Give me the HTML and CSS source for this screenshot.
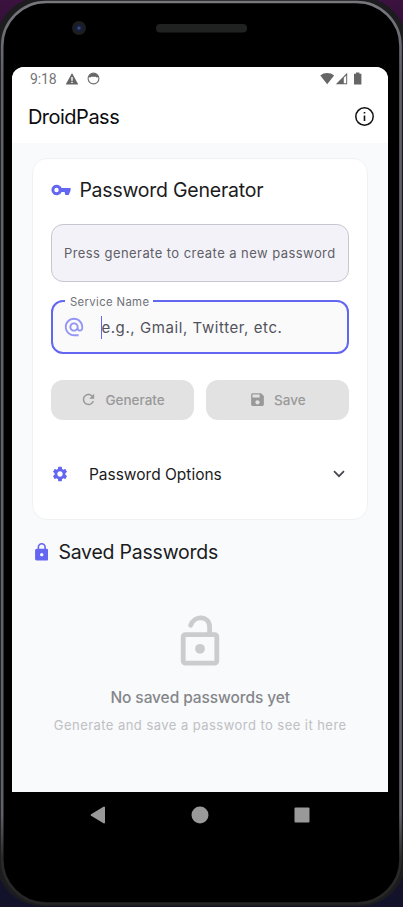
FILE: index.html
```html
<!DOCTYPE html>
<html lang="en">
<head>
<meta charset="utf-8">
<title>DroidPass</title>
<link rel="stylesheet" href="styles.css">
</head>
<body>
<div class="device">
  <svg class="shell" viewBox="0 0 403 907" aria-hidden="true">
    <defs>
      <linearGradient id="desk" x1="0" y1="0" x2="0" y2="1"><stop offset="0" stop-color="#3c123f"/><stop offset=".08" stop-color="#1d0d2b"/><stop offset="1" stop-color="#12122a"/></linearGradient>
      <linearGradient id="rim" x1="0" y1="0" x2="0" y2="1"><stop offset="0" stop-color="#77777d"/><stop offset=".08" stop-color="#606268"/><stop offset=".9" stop-color="#606268"/><stop offset=".95" stop-color="#2a2a2b"/><stop offset="1" stop-color="#262626"/></linearGradient>
    </defs>
    <rect width="403" height="907" fill="url(#desk)"/>
    <rect x="-4" y="-3" width="410" height="909" rx="46" fill="#1c1c1e"/>
    <rect x="2.200" y="2" width="398.300" height="901.500" rx="44" fill="#000" stroke="url(#rim)" stroke-width="2.600"/>
    <circle cx="79" cy="28" r="7" fill="#1c1d20"/>
    <circle cx="79" cy="28" r="4" fill="#182039"/>
    <circle cx="79" cy="28" r="1.600" fill="#3d4d83"/>
    <rect x="156" y="24" width="91" height="8.500" rx="4" fill="#202221"/>
  </svg>

  <main class="screen">
    <div class="status">
      <span class="time">9:18</span>
      <svg class="s-warn" viewBox="0 0 14 12"><path d="M7 0 13.300 11.600H.7z" fill="#666"/><path d="M6.300 4h1.400v3.800H6.300zM6.300 8.700h1.400v1.400H6.300z" fill="#fff"/></svg>
      <svg class="s-face" viewBox="0 0 13 13"><circle cx="6.500" cy="6.500" r="5.400" fill="none" stroke="#6c6c6c" stroke-width="1.100"/><path d="M1.600 4.500C3 .4 10 .4 11.400 4.500L10 5.800 8.700 4.800H4.200L3 5.800z" fill="#666"/></svg>
      <span class="grow"></span>
      <svg class="s-net" viewBox="0 0 42 14"><path d="M.3 3.500C4 .2 10.400.2 14.100 3.500L7.200 12.200z" fill="#666"/><path d="M15.800 12.200 27.200.8v11.400z" fill="#666"/><path d="M23.800 5.800 26.200 3.400v7.800h-2.400z" fill="#fff"/><path d="M34 1.800h2V.4h3.400v1.400h2v10.600H34z" fill="#666"/></svg>
    </div>
    <header class="appbar">
      <h1>DroidPass</h1>
      <svg class="info" viewBox="0 0 23 23"><circle cx="11.500" cy="11.500" r="8.700" fill="none" stroke="#111" stroke-width="1.500"/><path d="M10.700 7h1.600v1.600h-1.600zM10.700 10.400h1.600v5.600h-1.600z" fill="#111"/></svg>
    </header>

    <div class="content">
      <section class="card">
        <div class="heading">
          <svg class="i-key" viewBox="0 0 20 12"><path fill-rule="evenodd" d="M10.600 4A5.300 5.300 0 1 0 10.600 8H13.600L14.300 11H17.700L19.600 6.500V4zM5.500 3.800a2.200 2.200 0 1 1 0 4.400 2.200 2.200 0 0 1 0-4.400z"/></svg>
          <h2 class="t-gen">Password Generator</h2>
        </div>
        <div class="result"><span>Press generate to create a new password</span></div>
        <div class="field">
          <span class="label">Service Name</span>
          <svg class="i-at" viewBox="0 0 24 24"><path d="M12 2C6.480 2 2 6.480 2 12s4.480 10 10 10h5v-2h-5c-4.340 0-8-3.660-8-8s3.660-8 8-8 8 3.660 8 8v1.430c0 .79-.71 1.570-1.500 1.570s-1.500-.78-1.500-1.570V12c0-2.760-2.240-5-5-5s-5 2.240-5 5 2.240 5 5 5c1.380 0 2.640-.56 3.540-1.470.65.89 1.770 1.470 2.960 1.470 1.970 0 3.500-1.600 3.500-3.570V12c0-5.520-4.480-10-10-10zm0 13c-1.660 0-3-1.340-3-3s1.340-3 3-3 3 1.340 3 3-1.340 3-3 3z"/></svg>
          <span class="caret"></span>
          <span class="hint">e.g., Gmail, Twitter, etc.</span>
        </div>
        <div class="actions">
          <div class="btn">
            <svg class="i-ref" viewBox="0 0 24 24"><path d="M17.650 6.350C16.200 4.900 14.210 4 12 4c-4.420 0-7.990 3.580-7.990 8s3.570 8 7.990 8c3.730 0 6.840-2.550 7.730-6h-2.080c-.82 2.330-3.040 4-5.650 4-3.310 0-6-2.690-6-6s2.690-6 6-6c1.660 0 3.140.69 4.220 1.780L13 11h7V4l-2.350 2.350z"/></svg>
            <span>Generate</span>
          </div>
          <div class="btn">
            <svg class="i-save" viewBox="0 0 24 24"><path d="M17 3H5c-1.110 0-2 .9-2 2v14c0 1.100.89 2 2 2h14c1.100 0 2-.9 2-2V7l-4-4zm-5 16c-1.660 0-3-1.340-3-3s1.340-3 3-3 3 1.340 3 3-1.340 3-3 3zm3-10H5V5h10v4z"/></svg>
            <span>Save</span>
          </div>
        </div>
        <div class="options">
          <svg class="i-gear" viewBox="0 0 24 24"><path d="M19.140 12.940c.04-.3.060-.61.060-.94 0-.32-.02-.64-.07-.94l2.030-1.580c.18-.14.230-.41.120-.61l-1.920-3.320c-.12-.22-.37-.29-.59-.22l-2.390.96c-.5-.38-1.030-.7-1.620-.94l-.36-2.540c-.04-.24-.24-.41-.48-.41h-3.840c-.24 0-.43.17-.47.41l-.36 2.540c-.59.24-1.130.57-1.620.94l-2.390-.96c-.22-.08-.47 0-.59.22L2.740 8.870c-.12.21-.08.47.12.61l2.030 1.580c-.05.3-.09.63-.09.940s.02.64.07.94l-2.030 1.580c-.18.14-.23.41-.12.61l1.920 3.320c.12.22.37.29.59.22l2.390-.96c.5.38 1.030.7 1.620.94l.36 2.540c.05.24.24.41.48.41h3.840c.24 0 .44-.17.47-.41l.36-2.540c.59-.24 1.130-.56 1.620-.94l2.390.96c.22.08.47 0 .59-.22l1.920-3.320c.12-.22.070-.47-.12-.61l-2.010-1.580zM12 15.600c-1.980 0-3.600-1.620-3.600-3.600s1.620-3.600 3.600-3.600 3.600 1.620 3.600 3.600-1.620 3.600-3.600 3.600z"/></svg>
          <span class="t-opt">Password Options</span>
          <span class="grow"></span>
          <svg class="i-chev" viewBox="0 0 12 8"><path d="M1 1.200 6 6.200 11 1.200" fill="none" stroke="#46464f" stroke-width="1.700"/></svg>
        </div>
      </section>

      <div class="heading saved">
        <svg class="i-lock" viewBox="4 1 16 21"><path d="M18 8h-1V6c0-2.760-2.240-5-5-5S7 3.240 7 6v2H6c-1.100 0-2 .9-2 2v10c0 1.100.9 2 2 2h12c1.100 0 2-.9 2-2V10c0-1.100-.9-2-2-2zm-6 9c-1.100 0-2-.9-2-2s.9-2 2-2 2 .9 2 2-.9 2-2 2zm3.100-9H8.900V6c0-1.710 1.390-3.100 3.100-3.100s3.100 1.390 3.100 3.100v2z"/></svg>
        <h2 class="t-saved">Saved Passwords</h2>
      </div>

      <div class="empty">
        <svg class="i-open" viewBox="0 0 40 52"><g fill="none" stroke="#cbccce" stroke-width="4.800"><rect x="3.200" y="19.600" width="33.600" height="28.600" rx="2.200"/><path d="M10.700 10.300C14.500-.5 29.600.6 29.600 12v7" stroke-linecap="round"/></g><circle cx="20" cy="33.800" r="4.900" fill="#cbccce"/></svg>
        <p class="e1">No saved passwords yet</p>
        <p class="e2">Generate and save a password to see it here</p>
      </div>
    </div>
  </main>

  <nav class="nav">
    <svg viewBox="0 0 16 18"><path d="M1.600 9 14 1.600v14.800z" fill="#999" stroke="#999" stroke-width="2" stroke-linejoin="round"/></svg>
    <svg viewBox="0 0 18 18"><circle cx="9" cy="9" r="8.500" fill="#999"/></svg>
    <svg viewBox="0 0 16 18"><rect x=".5" y="1.500" width="15" height="15" rx="1" fill="#999"/></svg>
  </nav>
</div>
</body>
</html>
```
FILE: styles.css
```css
* { box-sizing: border-box; }
body { margin: 0; background: #000; }
h1, h2, p { margin: 0; font-weight: 400; }
svg { display: block; flex: none; }
.device {
  position: relative;
  width: 403px;
  height: 907px;
  overflow: hidden;
  padding: 67px 15.500px 0 12.400px;
  font-family: Inter, sans-serif;
  color: #1b1b21;
}
.device span, .device h1, .device h2, .device p { white-space: nowrap; }
.shell { position: absolute; left: 0; top: 0; width: 403px; height: 907px; }
.screen {
  position: relative;
  height: 725px;
  background: #f8fafc;
  border-radius: 12px 12px 0 0;
  overflow: hidden;
}
.grow { flex: 1; }

.status { display: flex; align-items: center; height: 23px; padding: 0 25.500px 0 17.500px; background: #fff; }
.time { width: 35px; font: 14px/16px Roboto, sans-serif; letter-spacing: -.1px; color: #757575; }
.s-warn { width: 14px; height: 12px; }
.s-face { width: 13px; height: 13px; margin-left: 8px; }
.s-net { width: 42px; height: 14px; }

.appbar { display: flex; align-items: center; justify-content: space-between; height: 53px; padding: 0 11.500px 0 15.500px; background: #fff; }
.appbar h1 { font-size: 20px; line-height: 26px; letter-spacing: -.5px; color: #0c0c0e; }
.info { width: 23px; height: 23px; }

.content { padding: 15px 19.500px 0 20px; }
.card {
  height: 361.500px;
  padding: 18.500px 18px 0 17.500px;
  background: #fff;
  border: 1px solid #f0f1f3;
  border-radius: 15px;
}
.heading { display: flex; align-items: center; height: 25px; }
.i-key { width: 20px; height: 12px; margin-right: 8.500px; fill: #6366f1; }
.t-gen, .t-saved { font-size: 19.500px; line-height: 25px; letter-spacing: -.23px; }

.result {
  display: flex;
  align-items: center;
  height: 57.500px;
  margin-top: 21.500px;
  padding-left: 12px;
  background: #f3f2f8;
  border: 1px solid #c8c6d1;
  border-radius: 12px;
}
.result span { font-size: 13px; letter-spacing: .44px; color: #5f5f68; }

.field {
  position: relative;
  display: flex;
  align-items: center;
  height: 53.500px;
  margin-top: 18.500px;
  padding: 1px 0 0 10.500px;
  background: #fafafa;
  border: 2px solid #6366f1;
  border-radius: 12px;
}
.label {
  position: absolute;
  left: 12.500px;
  top: -7.500px;
  padding: 0 4px 0 4.500px;
  font-size: 11.300px;
  line-height: 14px;
  letter-spacing: .38px;
  color: #707078;
  background: linear-gradient(#fff 50%, #fafafa 50%);
}
.i-at { width: 22px; height: 22px; fill: #9496f5; }
.caret { width: 1.500px; height: 23px; margin: 0 -1px 0 15.500px; background: #6366f1; }
.hint { font-size: 15px; letter-spacing: .58px; color: #52525a; }

.actions { display: flex; gap: 11.500px; margin-top: 26px; }
.btn {
  display: flex;
  flex: 1;
  align-items: center;
  justify-content: center;
  height: 40px;
  border-radius: 12px;
  background: #e2e2e2;
  color: #999;
  fill: #999;
  font-size: 13.500px;
  font-weight: 500;
}
.i-ref, .i-save { width: 17px; height: 17px; margin-right: 8px; }

.options { display: flex; align-items: center; height: 30px; margin-top: 39.500px; padding-right: 4.500px; }
.i-gear { width: 18px; height: 18px; fill: #6366f1; }
.t-opt { margin-left: 20px; font-size: 15.500px; }
.i-chev { width: 12px; height: 8px; }

.saved { margin-top: 20px; padding-left: 2.500px; }
.i-lock { width: 13.500px; height: 17.500px; margin-right: 10px; fill: #6366f1; }

.empty { display: flex; flex-direction: column; align-items: center; margin-top: 50px; }
.i-open { width: 40px; height: 52px; }
.e1 { margin-top: 21px; font-size: 15.500px; line-height: 20px; letter-spacing: -.09px; font-weight: 500; color: #85868a; }
.e2 { margin-top: 8px; font-size: 13px; line-height: 18px; letter-spacing: .45px; color: #bfc0c3; }

.nav { position: relative; display: flex; justify-content: space-between; height: 18px; margin: 13.500px 77.500px 0 77.500px; }
.nav svg { width: auto; height: 18px; }
```
